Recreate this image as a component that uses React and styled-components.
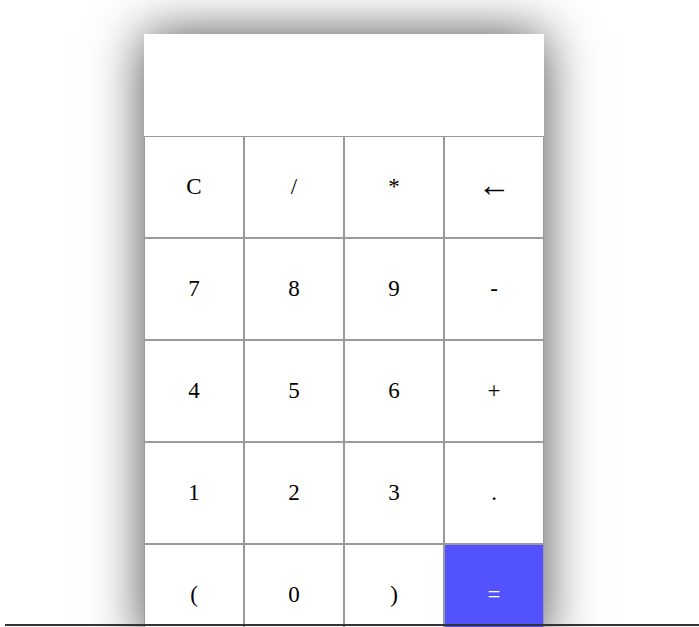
import React from 'react';
import styled, { createGlobalStyle } from 'styled-components';

const GlobalStyle = createGlobalStyle`
  html, body {
    margin: 0;
    padding: 0;
    background-color: #ffffff;
    font-family: 'Liberation Serif', 'Times New Roman', serif;
    overflow: hidden;
  }
`;

const Page = styled.div`
  padding: 34px 0 0 144px;
  height: 627px;
  box-sizing: border-box;
  overflow: hidden;
`;

const Calculator = styled.div`
  width: 400px;
  background-color: #ffffff;
  box-shadow: 0 0 50px rgba(0, 0, 0, 0.7);
`;

const Display = styled.div`
  height: 102px;
  background-color: #ffffff;
  font-size: 32px;
  text-align: right;
`;

const Keypad = styled.div`
  display: grid;
  grid-template-columns: repeat(4, 100px);
  grid-auto-rows: 102px;
`;

const Key = styled.button`
  box-sizing: border-box;
  border: 1px solid #9a9a9a;
  margin: 0;
  padding: 0;
  background-color: ${(p) => (p.$accent ? '#5252ff' : '#ffffff')};
  color: ${(p) => (p.$accent ? '#ffffff' : '#000000')};
  font-family: 'Liberation Serif', 'Times New Roman', serif;
  font-size: 23px;
  cursor: pointer;
  &:focus { outline: 0; }
`;

const Arrow = styled.span`
  font-size: 33px;
  line-height: 1;
  vertical-align: 3px;
`;

const BottomRule = styled.div`
  position: fixed;
  left: 5px;
  right: 0;
  bottom: 1px;
  height: 2px;
  background-color: #333333;
`;

const keys = ['C', '/', '*', '←', '7', '8', '9', '-', '4', '5', '6', '+', '1', '2', '3', '.', '(', '0', ')', '='];

export default function App() {
  return (
    <Page>
      <GlobalStyle />
      <Calculator>
        <Display />
        <Keypad>
          {keys.map((k) => (
            <Key key={k} $accent={k === '='}>
              {k === '←' ? <Arrow>{k}</Arrow> : k}
            </Key>
          ))}
        </Keypad>
      </Calculator>
      <BottomRule />
    </Page>
  );
}
